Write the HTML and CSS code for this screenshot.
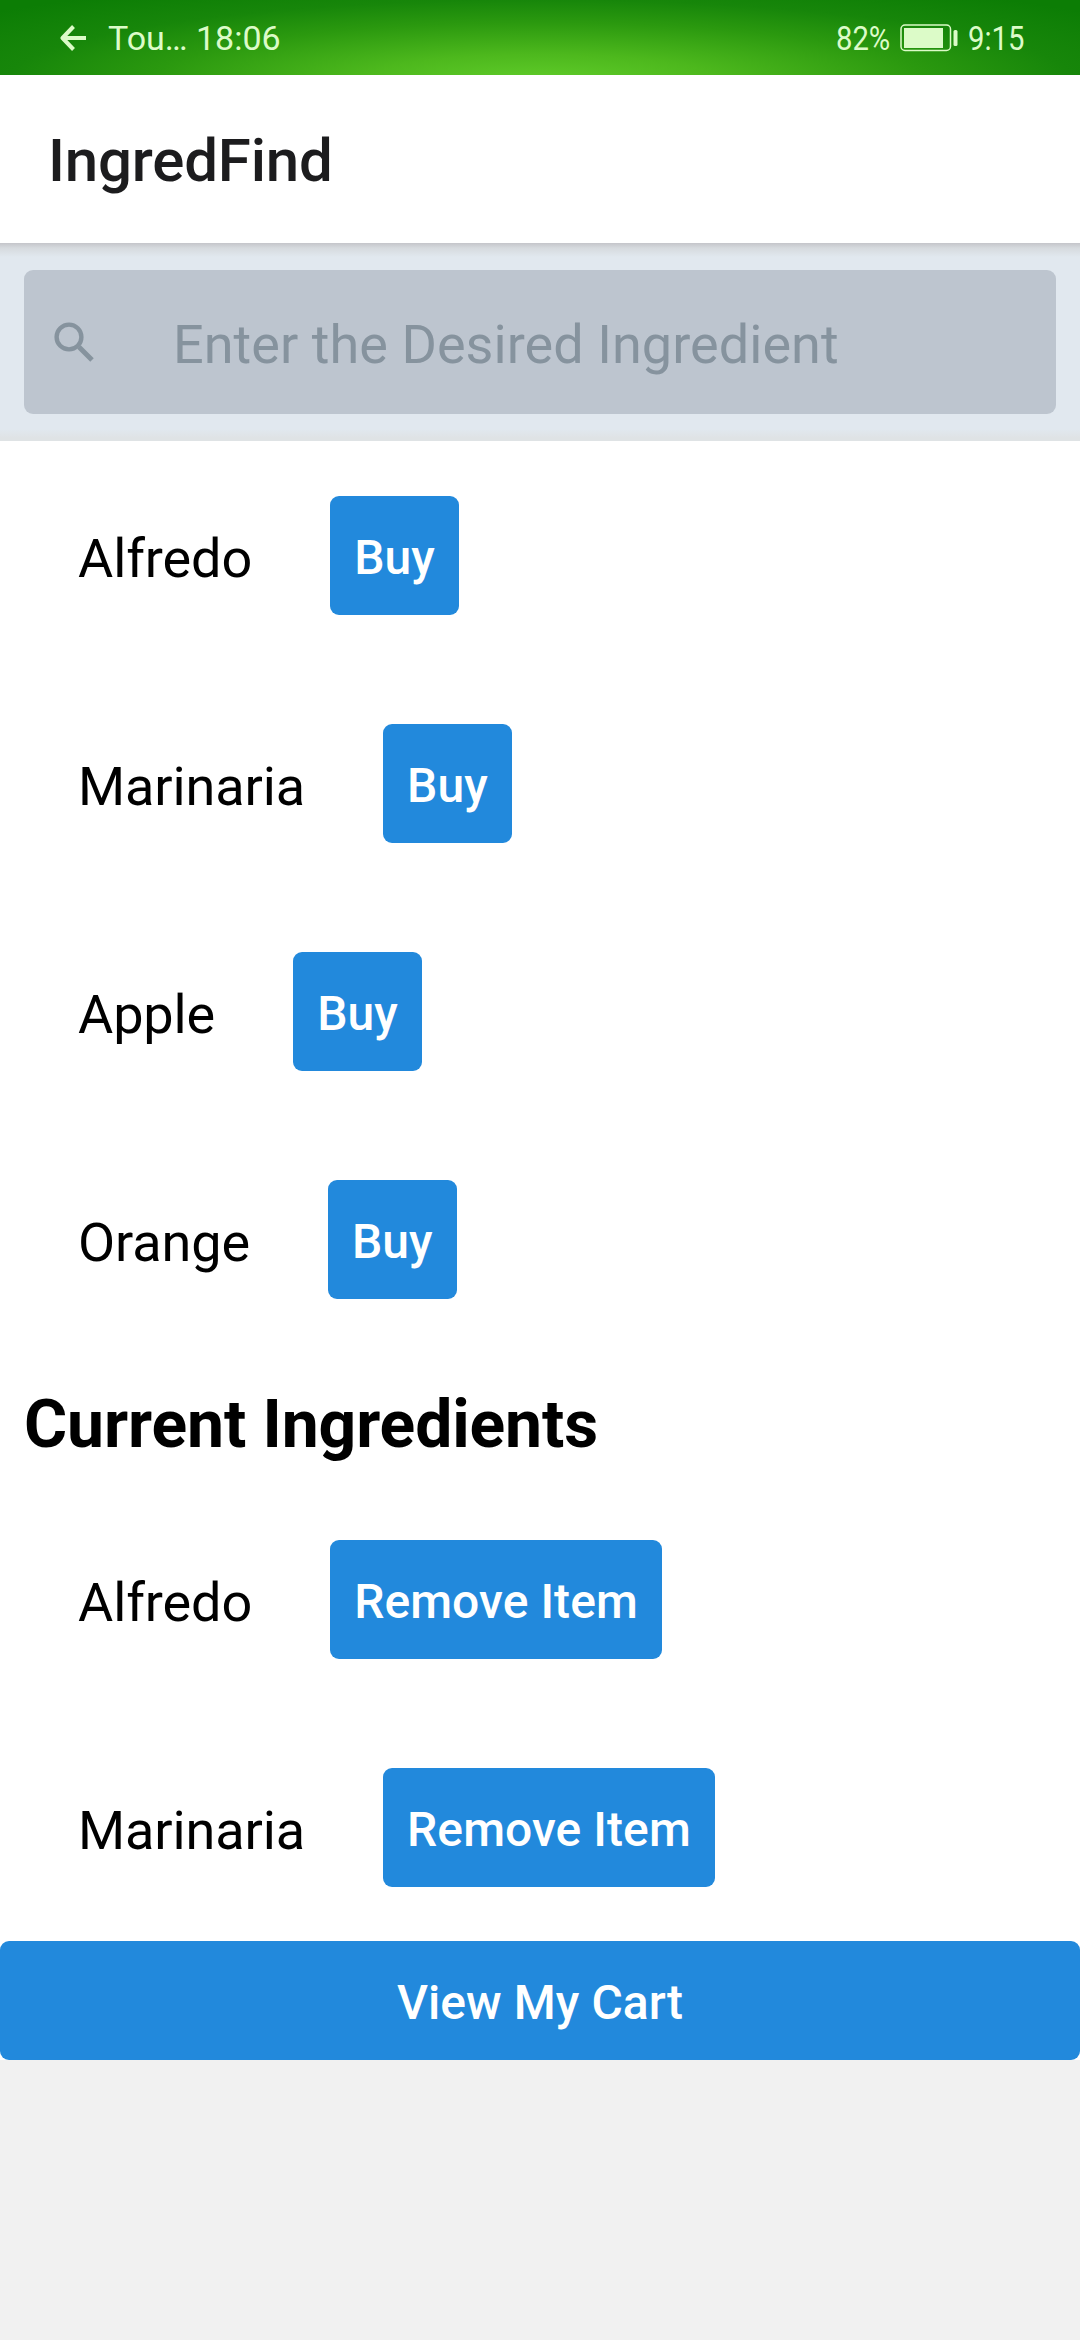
FILE: index.html
```html
<!DOCTYPE html>
<html lang="en">
<head>
<meta charset="utf-8">
<title>IngredFind</title>
<link rel="stylesheet" href="styles.css">
</head>
<body>
<div class="status">
  <div class="status-left">
    <svg class="back" viewBox="0 0 26 26"><path d="M13.500 1.500 2.500 13l11 11.500M2.500 13H26" fill="none" stroke="currentColor" stroke-width="4" stroke-linejoin="round"/></svg>
    <span class="status-app">Tou…</span>
    <span class="status-elapsed">18:06</span>
  </div>
  <div class="status-right">
    <span class="percent"><span class="narrow">82%</span></span>
    <svg class="battery" viewBox="0 0 58 28"><rect x="1" y="1" width="49.500" height="25.500" rx="4" fill="none" stroke="currentColor" stroke-width="1.500"/><rect x="4" y="4" width="39" height="20" fill="currentColor"/><rect x="53.500" y="6" width="4" height="16" rx="1.500" fill="currentColor"/></svg>
    <span class="clock"><span class="narrow">9:15</span></span>
  </div>
</div>
<header class="header"><h1 class="title">IngredFind</h1></header>
<div class="search-area">
  <div class="search">
    <svg class="search-icon" viewBox="0 0 40 40"><circle cx="15" cy="15" r="12.400" fill="none" stroke="currentColor" stroke-width="4.400"/><path d="M25 25 38 38" stroke="currentColor" stroke-width="5"/></svg>
    <span class="placeholder">Enter the Desired Ingredient</span>
  </div>
</div>
<main class="content">
  <div class="row"><span class="name">Alfredo</span><button class="button">Buy</button></div>
  <div class="row"><span class="name">Marinaria</span><button class="button">Buy</button></div>
  <div class="row"><span class="name">Apple</span><button class="button">Buy</button></div>
  <div class="row"><span class="name">Orange</span><button class="button">Buy</button></div>
  <h2 class="section">Current Ingredients</h2>
  <div class="row"><span class="name">Alfredo</span><button class="button">Remove Item</button></div>
  <div class="row"><span class="name">Marinaria</span><button class="button">Remove Item</button></div>
  <button class="button button-cart">View My Cart</button>
</main>
</body>
</html>
```
FILE: styles.css
```css
* { box-sizing: border-box; }
body {
  margin: 0;
  min-height: 2340px;
  background: #f1f1f1;
  color: #000;
  font-family: Roboto, "Liberation Sans", sans-serif;
}
.status {
  height: 75px;
  display: flex;
  justify-content: space-between;
  align-items: center;
  padding: 1px 53px 0 60px;
  color: #dcfbc8;
  font-size: 34px;
  line-height: 40px;
  background: radial-gradient(ellipse 590px 90px at 50% 108%, #60cc2a 0%, #4db81d 30%, #2b990f 65%, #17860a 90%, #0c7d05 120%);
}
.status-left, .status-right { display: flex; align-items: center; }
.back { width: 26px; height: 26px; margin-right: 22px; }
.status-app { width: 88px; }
.percent { width: 64px; }
.narrow { display: inline-block; transform: scaleX(.86); transform-origin: left; }
.battery { width: 58px; height: 28px; margin-right: 10px; }
.clock { width: 59px; }
.header {
  height: 168px;
  display: flex;
  align-items: center;
  padding: 3px 48px 0;
  background: #fff;
}
.title { margin: 0; font-size: 60px; font-weight: 500; letter-spacing: -.2px; color: #1c1c1e; }
.search-area {
  height: 198px;
  padding: 27px 24px;
  background: linear-gradient(#c4c5ca 0, #d6dade 5px, #e1e8ef 14px, #e1e8ef 186px, #dfe3e5 195px);
}
.search {
  height: 144px;
  display: flex;
  align-items: center;
  padding-left: 30px;
  border-radius: 9px;
  background: #bdc5cf;
  color: #86939e;
}
.search-icon { width: 40px; height: 40px; margin-right: 79px; }
.placeholder { font-size: 54px; letter-spacing: .05px; padding-top: 5px; }
.content { background: #fff; }
.row {
  height: 228px;
  display: flex;
  align-items: center;
  padding-left: 78px;
  gap: 78px;
}
.name { font-size: 54px; letter-spacing: -.1px; padding-top: 6px; }
.button {
  height: 119px;
  padding: 5px 24px 0;
  border: 0;
  border-radius: 9px;
  background: #2289dc;
  color: #fff;
  font: 500 48px Roboto, "Liberation Sans", sans-serif;
  letter-spacing: .08px;
}
.section {
  height: 132px;
  margin: 0;
  padding: 33px 24px 0;
  font-size: 66px;
  line-height: 77px;
  font-weight: 700;
  letter-spacing: -.1px;
}
.button-cart { display: block; width: 100%; padding-top: 4px; }
```
